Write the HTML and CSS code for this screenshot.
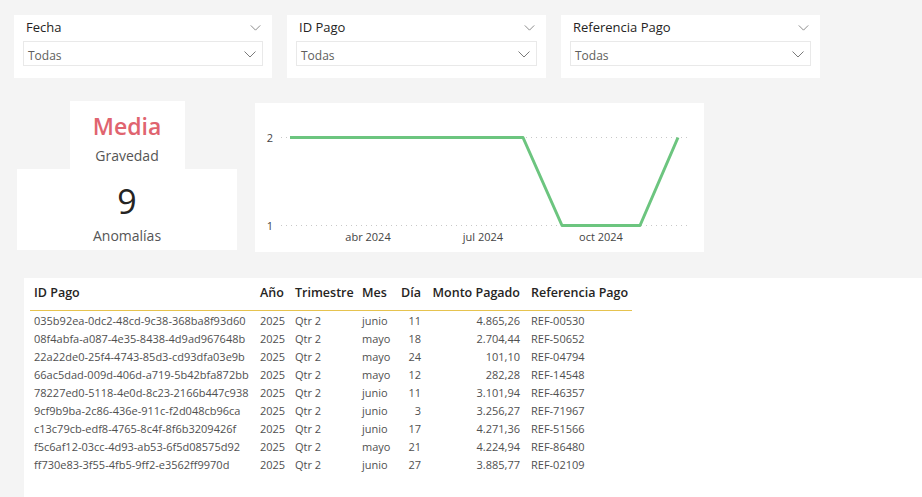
FILE: index.html
```html
<!DOCTYPE html>
<html lang="es">
<head>
<meta charset="utf-8">
<title>Anomalías de pagos</title>
<link rel="stylesheet" href="styles.css">
</head>
<body>
<div class="page">
  <div class="slicers">
    <div class="slicer">
      <div class="slicer-head"><span>Fecha</span><svg class="chev" viewBox="0 0 12 7"><path d="M0.5 0.5 L6 6 L11.5 0.5"/></svg></div>
      <div class="dropdown"><span>Todas</span><svg class="chev" viewBox="0 0 12 7"><path d="M0.5 0.5 L6 6 L11.5 0.5"/></svg></div>
    </div>
    <div class="slicer">
      <div class="slicer-head"><span>ID Pago</span><svg class="chev" viewBox="0 0 12 7"><path d="M0.5 0.5 L6 6 L11.5 0.5"/></svg></div>
      <div class="dropdown"><span>Todas</span><svg class="chev" viewBox="0 0 12 7"><path d="M0.5 0.5 L6 6 L11.5 0.5"/></svg></div>
    </div>
    <div class="slicer">
      <div class="slicer-head"><span>Referencia Pago</span><svg class="chev" viewBox="0 0 12 7"><path d="M0.5 0.5 L6 6 L11.5 0.5"/></svg></div>
      <div class="dropdown"><span>Todas</span><svg class="chev" viewBox="0 0 12 7"><path d="M0.5 0.5 L6 6 L11.5 0.5"/></svg></div>
    </div>
  </div>

  <div class="middle">
    <div class="kpis">
      <div class="kpi kpi-top">
        <div class="kpi-value red">Media</div>
        <div class="kpi-label">Gravedad</div>
      </div>
      <div class="kpi kpi-bottom">
        <div class="kpi-value big">9</div>
        <div class="kpi-label">Anomalías</div>
      </div>
    </div>
    <div class="chart">
      <svg width="449" height="149" viewBox="0 0 449 149">
        <line class="grid" x1="26" y1="34.5" x2="432" y2="34.5"/>
        <line class="grid" x1="26" y1="122.5" x2="432" y2="122.5"/>
        <text class="ylab" x="15" y="38.5">2</text>
        <text class="ylab" x="15" y="126.5">1</text>
        <polyline class="series" points="35,34.5 268,34.5 307,122.5 385,122.5 423,34.5"/>
        <text class="xlab" x="113" y="138">abr 2024</text>
        <text class="xlab" x="228" y="138">jul 2024</text>
        <text class="xlab" x="346" y="138">oct 2024</text>
      </svg>
    </div>
  </div>

  <div class="table-card">
    <table class="data">
      <colgroup>
        <col class="c-id"><col class="c-year"><col class="c-q"><col class="c-mes"><col class="c-dia"><col class="c-monto"><col class="c-ref">
      </colgroup>
      <thead>
        <tr><th>ID Pago</th><th>Año</th><th>Trimestre</th><th>Mes</th><th class="num">Día</th><th class="num">Monto Pagado</th><th class="ref">Referencia Pago</th></tr>
      </thead>
      <tbody>
        <tr><td>035b92ea-0dc2-48cd-9c38-368ba8f93d60</td><td>2025</td><td>Qtr 2</td><td>junio</td><td class="num">11</td><td class="num">4.865,26</td><td class="ref">REF-00530</td></tr>
        <tr><td>08f4abfa-a087-4e35-8438-4d9ad967648b</td><td>2025</td><td>Qtr 2</td><td>mayo</td><td class="num">18</td><td class="num">2.704,44</td><td class="ref">REF-50652</td></tr>
        <tr><td>22a22de0-25f4-4743-85d3-cd93dfa03e9b</td><td>2025</td><td>Qtr 2</td><td>mayo</td><td class="num">24</td><td class="num">101,10</td><td class="ref">REF-04794</td></tr>
        <tr><td>66ac5dad-009d-406d-a719-5b42bfa872bb</td><td>2025</td><td>Qtr 2</td><td>mayo</td><td class="num">12</td><td class="num">282,28</td><td class="ref">REF-14548</td></tr>
        <tr><td>78227ed0-5118-4e0d-8c23-2166b447c938</td><td>2025</td><td>Qtr 2</td><td>junio</td><td class="num">11</td><td class="num">3.101,94</td><td class="ref">REF-46357</td></tr>
        <tr><td>9cf9b9ba-2c86-436e-911c-f2d048cb96ca</td><td>2025</td><td>Qtr 2</td><td>junio</td><td class="num">3</td><td class="num">3.256,27</td><td class="ref">REF-71967</td></tr>
        <tr><td>c13c79cb-edf8-4765-8c4f-8f6b3209426f</td><td>2025</td><td>Qtr 2</td><td>junio</td><td class="num">17</td><td class="num">4.271,36</td><td class="ref">REF-51566</td></tr>
        <tr><td>f5c6af12-03cc-4d93-ab53-6f5d08575d92</td><td>2025</td><td>Qtr 2</td><td>mayo</td><td class="num">21</td><td class="num">4.224,94</td><td class="ref">REF-86480</td></tr>
        <tr><td>ff730e83-3f55-4fb5-9ff2-e3562ff9970d</td><td>2025</td><td>Qtr 2</td><td>junio</td><td class="num">27</td><td class="num">3.885,77</td><td class="ref">REF-02109</td></tr>
      </tbody>
    </table>
  </div>
</div>
</body>
</html>
```

FILE: styles.css
```css
html, body {
  margin: 0;
  padding: 0;
  background: #f4f4f4;
  font-family: "Segoe UI", "Open Sans", "Noto Sans", sans-serif;
  color: #252423;
  overflow: hidden;
}

.page {
  width: 922px;
  height: 497px;
  display: flex;
  flex-direction: column;
}

/* Slicers */
.slicers {
  display: flex;
  gap: 15px;
  padding: 15px 0 0 14px;
}

.slicer {
  width: 258px;
  height: 63px;
  box-sizing: border-box;
  background: #fff;
  padding: 2px 9px 12px 9px;
  display: flex;
  flex-direction: column;
  gap: 4px;
}
.slicer:nth-child(2) { width: 259px; }
.slicer:nth-child(3) { width: 259px; }

.slicer-head {
  height: 20px;
  display: flex;
  align-items: center;
  justify-content: space-between;
  padding: 0 2px 0 3px;
  font-size: 13px;
  color: #252423;
}
.slicer-head .chev { margin-top: 1px; }

.chev {
  width: 11px;
  height: 6px;
  fill: none;
  stroke: #7a7a7a;
  stroke-width: 1;
}

.dropdown {
  height: 25px;
  box-sizing: border-box;
  border: 1px solid #e9e9e9;
  display: flex;
  align-items: center;
  justify-content: space-between;
  padding: 3px 6px 0 4px;
  font-size: 12px;
  color: #605e5c;
}
.dropdown .chev { width: 12px; height: 7px; margin-top: -1px; }

/* Middle row */
.middle {
  display: flex;
  align-items: flex-start;
  margin-top: 23px;
  padding-left: 17px;
  gap: 18px;
}

.kpis {
  width: 220px;
  display: flex;
  flex-direction: column;
  align-items: center;
}

.kpi {
  background: #fff;
  display: flex;
  flex-direction: column;
  align-items: center;
  box-sizing: border-box;
}
.kpi-top {
  width: 115px;
  height: 68px;
  padding-top: 9px;
}
.kpi-bottom {
  width: 220px;
  height: 81px;
  padding-top: 9px;
}

.kpi-value {
  line-height: 32px;
  font-size: 23px;
  font-weight: 600;
}
.kpi-value.red { color: #e0646f; }
.kpi-value.big {
  font-size: 34px;
  font-weight: 400;
  line-height: 46px;
  color: #252423;
}
.kpi-label {
  font-size: 14px;
  line-height: 20px;
  color: #555;
}
.kpi-top .kpi-label { margin-top: 4px; }
.kpi-bottom .kpi-label { margin-top: 2px; }

.chart {
  width: 449px;
  height: 149px;
  background: #fff;
  margin-top: 2px;
}
.chart svg { display: block; }
.grid {
  stroke: #c8c8c8;
  stroke-width: 1;
  stroke-dasharray: 1 4;
}
.series {
  fill: none;
  stroke: #6cc57f;
  stroke-width: 3;
  stroke-linejoin: round;
}
.ylab {
  font-size: 11px;
  fill: #444;
  text-anchor: middle;
  font-family: "Segoe UI", "Open Sans", sans-serif;
}
.xlab {
  font-size: 11px;
  fill: #444;
  text-anchor: middle;
  font-family: "Segoe UI", "Open Sans", sans-serif;
}

/* Table */
.table-card {
  flex: 1;
  margin: 26px 0 0 24px;
  background: #fff;
  padding: 6px 0 0 6px;
}

.data {
  border-collapse: collapse;
  table-layout: fixed;
  width: 602px;
}
.c-id { width: 226px; }
.c-year { width: 35px; }
.c-q { width: 67px; }
.c-mes { width: 37px; }
.c-dia { width: 29px; }
.c-monto { width: 99px; }
.c-ref { width: 109px; }

.data th {
  font-size: 12.5px;
  font-weight: 600;
  color: #252423;
  text-align: left;
  line-height: 18px;
  padding: 0 3px 8px 4px;
  border-bottom: 1px solid #e6c34f;
  white-space: nowrap;
}
.data td {
  font-size: 11px;
  color: #505050;
  line-height: 18px;
  height: 18px;
  padding: 0 3px 0 4px;
  white-space: nowrap;
  overflow: hidden;
}
.data tbody tr:first-child td { padding-top: 1px; }
.data .num { text-align: right; }
.data .ref { padding-left: 8px; }
```
